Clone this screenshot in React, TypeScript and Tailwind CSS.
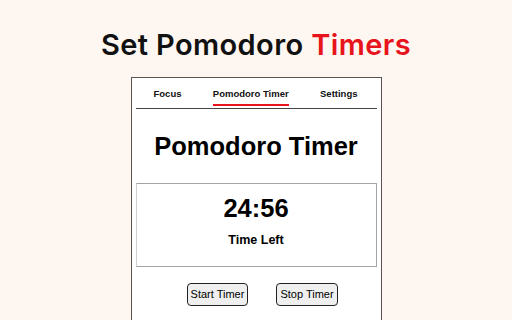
export default function App() {
  const tabs = ["Focus", "Pomodoro Timer", "Settings"];
  const active = "Pomodoro Timer";

  return (
    <div className="h-[320px] w-[512px] overflow-hidden bg-[#fdf6f1] flex flex-col items-center">
      <h1 className="mt-[27px] text-[29px] leading-[35px] font-semibold tracking-[0.4px] text-[#111] font-['Inter',sans-serif]">
        Set Pomodoro <span className="text-[#e8141b]">Timers</span>
      </h1>

      <div className="mt-[15px] w-[251px] flex-1 bg-white border border-[#5a5350] border-b-0 px-[4px] font-['Liberation_Sans',Arial,sans-serif]">
        <nav className="flex justify-between pl-[18px] pr-[19px] border-b border-[#444] h-[31px] items-end">
          {tabs.map((t) => (
            <div
              key={t}
              className={
                t === active
                  ? "text-[9.5px] font-bold text-[#111] pb-[3px] border-b-2 border-[#e8141b] mb-[2px]"
                  : "text-[9.5px] font-bold text-[#111] pb-[5px] mb-[2px]"
              }
            >
              {t}
            </div>
          ))}
        </nav>

        <h2 className="mt-[22px] text-center text-[25.5px] leading-[30px] font-bold text-black">
          Pomodoro Timer
        </h2>

        <div className="mt-[22px] h-[84px] border border-[#a3a3a3] border-l-[#cfcfcf] flex flex-col items-center">
          <div className="mt-[9px] text-[25.5px] leading-[30px] font-bold text-black">24:56</div>
          <div className="mt-[10px] text-[12.5px] leading-[14px] font-bold text-black">Time Left</div>
        </div>

        <div className="mt-[16px] pl-[13px] flex justify-center gap-[28px]">
          <button className="h-[23px] w-[61px] rounded-[4px] border border-[#222] bg-[#efefef] text-[11px] text-black">
            Start Timer
          </button>
          <button className="h-[23px] w-[62px] rounded-[4px] border border-[#222] bg-[#efefef] text-[11px] text-black">
            Stop Timer
          </button>
        </div>
      </div>
    </div>
  );
}
